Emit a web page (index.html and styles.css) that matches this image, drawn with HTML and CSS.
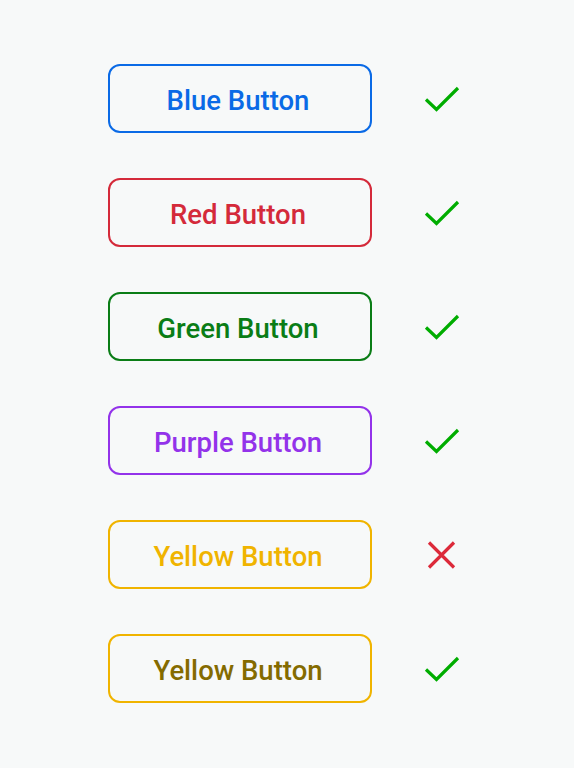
FILE: index.html
```html
<!DOCTYPE html>
<html>
<head>
<meta charset="utf-8">
<link rel="stylesheet" href="styles.css">
</head>
<body>
<div class="list">
  <div class="row">
    <button class="btn blue">Blue Button</button>
    <svg class="icon" viewBox="0 0 36 28"><path d="M2 14.5 L12.5 24.5 L34 3" class="ok"/></svg>
  </div>
  <div class="row">
    <button class="btn red">Red Button</button>
    <svg class="icon" viewBox="0 0 36 28"><path d="M2 14.5 L12.5 24.5 L34 3" class="ok"/></svg>
  </div>
  <div class="row">
    <button class="btn green">Green Button</button>
    <svg class="icon" viewBox="0 0 36 28"><path d="M2 14.5 L12.5 24.5 L34 3" class="ok"/></svg>
  </div>
  <div class="row">
    <button class="btn purple">Purple Button</button>
    <svg class="icon" viewBox="0 0 36 28"><path d="M2 14.5 L12.5 24.5 L34 3" class="ok"/></svg>
  </div>
  <div class="row">
    <button class="btn yellow">Yellow Button</button>
    <svg class="icon" viewBox="0 0 36 28"><path d="M5 1.5 L30 26.5 M30 1.5 L5 26.5" class="bad"/></svg>
  </div>
  <div class="row">
    <button class="btn yellow dark">Yellow Button</button>
    <svg class="icon" viewBox="0 0 36 28"><path d="M2 14.5 L12.5 24.5 L34 3" class="ok"/></svg>
  </div>
</div>
</body>
</html>
```
FILE: styles.css
```css
html, body {
  margin: 0;
  padding: 0;
  background: #f7f9f9;
  font-family: Roboto, "Liberation Sans", sans-serif;
}
.list {
  display: flex;
  flex-direction: column;
  gap: 45px;
  padding: 64px 0 0 108px;
}
.row {
  display: flex;
  align-items: center;
  gap: 52px;
}
.btn {
  box-sizing: border-box;
  width: 264px;
  height: 69px;
  border-radius: 12px;
  border: 2px solid;
  background: transparent;
  font-family: Roboto, "Liberation Sans", sans-serif;
  font-weight: 500;
  font-size: 27.5px;
  line-height: 1;
  padding: 5px 4px 0 0;
}
.blue { color: #0a6ae6; border-color: #0a6ae6; }
.red { color: #d42a3a; border-color: #d42a3a; }
.green { color: #0a7d16; border-color: #0a7d16; }
.purple { color: #9333ea; border-color: #9333ea; }
.yellow { color: #f0b400; border-color: #f0b400; }
.yellow.dark { color: #846b00; }
.icon {
  width: 36px;
  height: 28px;
  display: block;
}
.icon path {
  fill: none;
  stroke-width: 3.2;
}
.ok { stroke: #00ad00; }
.bad { stroke: #dc2a3a; }
```
